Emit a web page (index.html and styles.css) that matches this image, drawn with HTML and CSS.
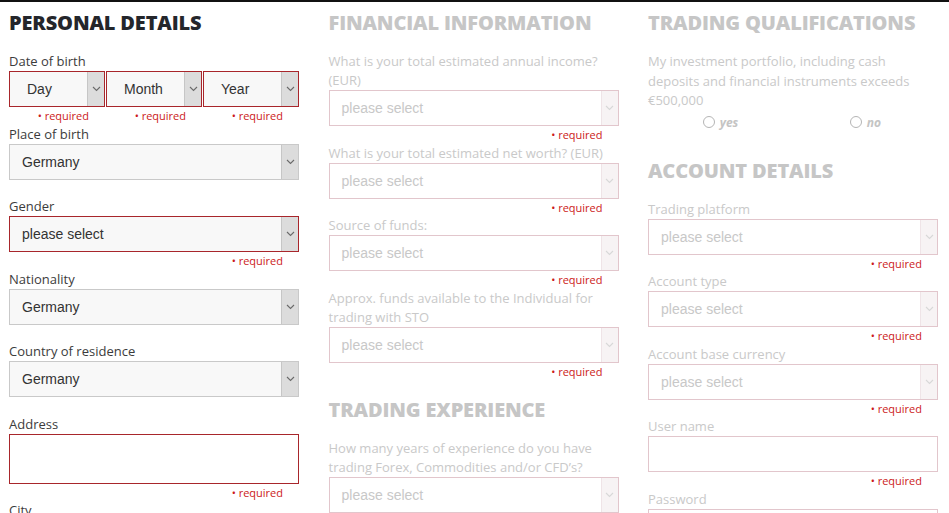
FILE: index.html
```html
<!DOCTYPE html>
<html lang="en">
<head>
    <meta charset="UTF-8">
    <meta name="viewport" content="width=device-width, initial-scale=1.0">
    <title>Open an Account</title>
    <link rel="stylesheet" href="styles.css">
</head>
<body>
    <div class="page">
        <div class="columns">

            <!-- Personal details -->
            <section class="col">
                <h2>PERSONAL DETAILS</h2>

                <div class="field">
                    <label>Date of birth</label>
                    <div class="date-row">
                        <div>
                            <div class="select date error"><span class="value">Day</span><span class="arrow"><svg viewBox="0 0 9 6"><path d="M1 1l3.5 3.5L8 1"/></svg></span></div>
                            <div class="required">&bull; required</div>
                        </div>
                        <div>
                            <div class="select date error"><span class="value">Month</span><span class="arrow"><svg viewBox="0 0 9 6"><path d="M1 1l3.5 3.5L8 1"/></svg></span></div>
                            <div class="required">&bull; required</div>
                        </div>
                        <div>
                            <div class="select date error"><span class="value">Year</span><span class="arrow"><svg viewBox="0 0 9 6"><path d="M1 1l3.5 3.5L8 1"/></svg></span></div>
                            <div class="required">&bull; required</div>
                        </div>
                    </div>
                </div>

                <div class="field">
                    <label>Place of birth</label>
                    <div class="select"><span class="value">Germany</span><span class="arrow"><svg viewBox="0 0 9 6"><path d="M1 1l3.5 3.5L8 1"/></svg></span></div>
                    <div class="required hidden">&bull; required</div>
                </div>

                <div class="field">
                    <label>Gender</label>
                    <div class="select error"><span class="value">please select</span><span class="arrow"><svg viewBox="0 0 9 6"><path d="M1 1l3.5 3.5L8 1"/></svg></span></div>
                    <div class="required">&bull; required</div>
                </div>

                <div class="field">
                    <label>Nationality</label>
                    <div class="select"><span class="value">Germany</span><span class="arrow"><svg viewBox="0 0 9 6"><path d="M1 1l3.5 3.5L8 1"/></svg></span></div>
                    <div class="required hidden">&bull; required</div>
                </div>

                <div class="field">
                    <label>Country of residence</label>
                    <div class="select"><span class="value">Germany</span><span class="arrow"><svg viewBox="0 0 9 6"><path d="M1 1l3.5 3.5L8 1"/></svg></span></div>
                    <div class="required hidden">&bull; required</div>
                </div>

                <div class="field">
                    <label>Address</label>
                    <div class="input tall error"></div>
                    <div class="required">&bull; required</div>
                </div>

                <div class="field">
                    <label>City</label>
                </div>
            </section>

            <!-- Financial information -->
            <section class="col faded">
                <h2>FINANCIAL INFORMATION</h2>

                <div class="field">
                    <label>What is your total estimated annual income? (EUR)</label>
                    <div class="select"><span class="value">please select</span><span class="arrow"><svg viewBox="0 0 9 6"><path d="M1 1l3.5 3.5L8 1"/></svg></span></div>
                    <div class="required">&bull; required</div>
                </div>

                <div class="field">
                    <label>What is your total estimated net worth? (EUR)</label>
                    <div class="select"><span class="value">please select</span><span class="arrow"><svg viewBox="0 0 9 6"><path d="M1 1l3.5 3.5L8 1"/></svg></span></div>
                    <div class="required">&bull; required</div>
                </div>

                <div class="field">
                    <label>Source of funds:</label>
                    <div class="select"><span class="value">please select</span><span class="arrow"><svg viewBox="0 0 9 6"><path d="M1 1l3.5 3.5L8 1"/></svg></span></div>
                    <div class="required">&bull; required</div>
                </div>

                <div class="field">
                    <label>Approx. funds available to the Individual for trading with STO</label>
                    <div class="select"><span class="value">please select</span><span class="arrow"><svg viewBox="0 0 9 6"><path d="M1 1l3.5 3.5L8 1"/></svg></span></div>
                    <div class="required">&bull; required</div>
                </div>

                <h2 class="next">TRADING EXPERIENCE</h2>

                <div class="field">
                    <label>How many years of experience do you have trading Forex, Commodities and/or CFD&rsquo;s?</label>
                    <div class="select"><span class="value">please select</span><span class="arrow"><svg viewBox="0 0 9 6"><path d="M1 1l3.5 3.5L8 1"/></svg></span></div>
                </div>
            </section>

            <!-- Trading qualifications / account -->
            <section class="col faded">
                <h2>TRADING QUALIFICATIONS</h2>

                <p class="note">My investment portfolio, including cash deposits and financial instruments exceeds &euro;500,000</p>
                <div class="radios">
                    <label class="radio"><span class="dot"></span>yes</label>
                    <label class="radio"><span class="dot"></span>no</label>
                </div>

                <h2 class="next account">ACCOUNT DETAILS</h2>

                <div class="field">
                    <label>Trading platform</label>
                    <div class="select"><span class="value">please select</span><span class="arrow"><svg viewBox="0 0 9 6"><path d="M1 1l3.5 3.5L8 1"/></svg></span></div>
                    <div class="required">&bull; required</div>
                </div>

                <div class="field">
                    <label>Account type</label>
                    <div class="select"><span class="value">please select</span><span class="arrow"><svg viewBox="0 0 9 6"><path d="M1 1l3.5 3.5L8 1"/></svg></span></div>
                    <div class="required">&bull; required</div>
                </div>

                <div class="field">
                    <label>Account base currency</label>
                    <div class="select"><span class="value">please select</span><span class="arrow"><svg viewBox="0 0 9 6"><path d="M1 1l3.5 3.5L8 1"/></svg></span></div>
                    <div class="required">&bull; required</div>
                </div>

                <div class="field">
                    <label>User name</label>
                    <div class="input"></div>
                    <div class="required">&bull; required</div>
                </div>

                <div class="field">
                    <label>Password</label>
                    <div class="input"></div>
                </div>
            </section>

        </div>
    </div>
</body>
</html>
```

FILE: styles.css
```css
* {
    margin: 0;
    padding: 0;
    box-sizing: border-box;
}

body {
    background: #fff;
    font-family: 'Open Sans', 'Liberation Sans', sans-serif;
    color: #3a3a3a;
    overflow: hidden;
}

.page {
    border-top: 2px solid #111;
    padding: 7px 0 0 9px;
}

.columns {
    display: grid;
    grid-template-columns: 290px 290px 290px;
    column-gap: 29.5px;
}

h2 {
    font-size: 20px;
    font-weight: 800;
    line-height: 28px;
    color: #24262b;
    margin-bottom: 15px;
    letter-spacing: -0.15px;
}

h2.next {
    margin-top: 15.5px;
}

h2.account {
    margin-top: 26px;
}

label {
    display: block;
    font-size: 13px;
    line-height: 19px;
    color: #3c3c3c;
}

.select,
.input {
    height: 36px;
    border: 1px solid #c9c9c9;
    background: #f8f8f8;
    display: flex;
    align-items: center;
}

.input {
    background: #fff;
}

.input.tall {
    height: 50px;
}

.select .value {
    flex: 1;
    padding-left: 12px;
    font-family: 'Liberation Sans', Arial, sans-serif;
    font-size: 14px;
    color: #333;
}

.select.date .value {
    padding-left: 17px;
}

.select .arrow {
    width: 17px;
    align-self: stretch;
    background: #dcdcdc;
    border-left: 1px solid #c6c6c6;
    display: flex;
    align-items: center;
    justify-content: center;
}

.arrow svg {
    width: 9px;
    height: 6px;
    fill: none;
    stroke: #6a6a6a;
    stroke-width: 1.1;
}

.error {
    border-color: #a8262b;
}

.date-row {
    display: grid;
    grid-template-columns: repeat(3, 1fr);
    column-gap: 1px;
}

.required {
    font-size: 11px;
    line-height: 17.5px;
    color: #cc1a1a;
    text-align: right;
    padding-right: 16px;
}

.required.hidden {
    visibility: hidden;
}

/* inactive columns */
.faded h2 {
    color: #c6c6c6;
}

.faded label,
.faded .note {
    color: #c9c9c9;
}

.faded .select,
.faded .input {
    background: #fff;
    border-color: #e2c6cc;
}

.faded .select .value {
    color: #c8c8c8;
}

.faded .select .arrow {
    background: #f7f3f4;
    border-left-color: #efe4e7;
}

.faded .arrow svg {
    stroke: #d8d8d8;
}

.note {
    font-size: 13px;
    line-height: 19.5px;
}

.radios {
    display: grid;
    grid-template-columns: 1fr 1fr;
    margin-top: 2px;
    height: 18px;
}

.radios .radio {
    display: flex;
    align-items: center;
    justify-content: center;
    font-size: 12px;
    font-weight: 700;
    font-style: italic;
    color: #c4c4c4;
}

.radio .dot {
    width: 12px;
    height: 12px;
    border: 1px solid #b5b5b5;
    border-radius: 50%;
    background: #fff;
    margin-right: 5px;
}
```
